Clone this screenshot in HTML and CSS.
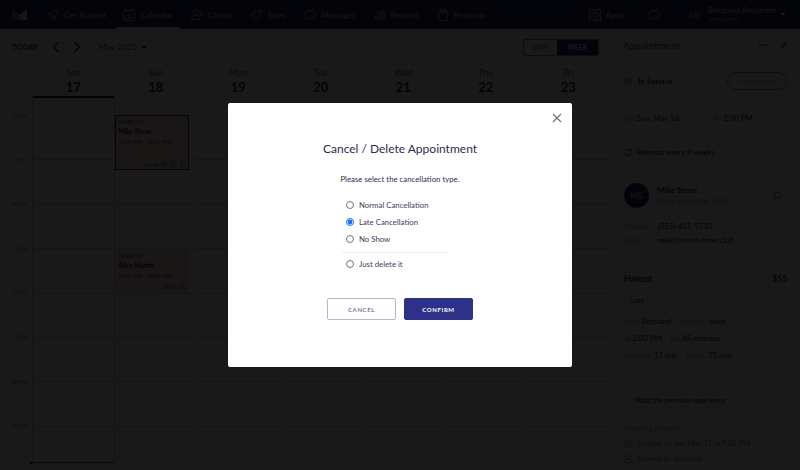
FILE: index.html
```html
<!DOCTYPE html>
<html lang="en">
<head>
  <meta charset="UTF-8" />
  <title>Calendar</title>
  <link rel="stylesheet" href="styles.css">
</head>
<body>
  <svg class="sprites" width="0" height="0">
    <symbol id="i-repeat" viewBox="0 0 12 12">
      <path d="M2 6a4 4 0 0 1 7-2.6M10 6a4 4 0 0 1-7 2.6" fill="none" stroke="currentColor" stroke-width="1.3"/>
      <path d="M10.6 1.4v3H7.6zM1.4 10.6v-3h3z" fill="currentColor"/>
    </symbol>
    <symbol id="i-new" viewBox="0 0 12 12">
      <circle cx="6" cy="6" r="5" fill="none" stroke="currentColor"/>
      <path d="M4 4l4 4M8 4l-4 4" stroke="currentColor"/>
    </symbol>
    <symbol id="i-chat" viewBox="0 0 14 14">
      <path d="M7 1.5c3.300 0 6 2.100 6 4.800s-2.700 4.800-6 4.800c-.8 0-1.500-.1-2.200-.3L2 12.500l.6-2.800C1.600 8.800 1 7.600 1 6.300 1 3.600 3.700 1.500 7 1.500z" fill="none" stroke="currentColor"/>
    </symbol>
  </svg>

  <!-- Top nav -->
  <header class="topbar">
    <svg class="logo" viewBox="0 0 15 11">
      <path d="M0 0l7.500 6V11H0z" fill="#777"/>
      <path d="M15 0L7.500 6V11H15z" fill="#ddd"/>
    </svg>
    <nav class="nav">
      <a class="nav-item">
        <svg class="nav-icon" viewBox="0 0 12 12"><path d="M4 8C4 5 7 1.500 11 1c-.5 4-4 7-7 7zM3 5.500H1l2-2h2M6.500 9v2l2-2V7M3 9l-2 2" fill="none" stroke="currentColor" stroke-width=".8"/></svg>
        Get Started
      </a>
      <a class="nav-item active">
        <svg class="nav-icon" viewBox="0 0 12 12"><rect x=".5" y="1.500" width="11" height="10" rx="1" fill="none" stroke="currentColor" stroke-width=".8"/><path d="M3 .5v2M9 .5v2" stroke="currentColor" stroke-width=".8"/><path d="M4 5.500h1.500v4H4M7.500 5.500v4" fill="none" stroke="currentColor" stroke-width=".7"/></svg>
        Calendar
      </a>
      <a class="nav-item">
        <svg class="nav-icon" viewBox="0 0 12 12"><circle cx="4.500" cy="3.500" r="2.300" fill="none" stroke="currentColor" stroke-width=".8"/><circle cx="8.500" cy="3.500" r="2" fill="none" stroke="currentColor" stroke-width=".8"/><path d="M.5 10.500c0-3 2-4 4-4s4 1 4 4zM9 6.500c1.500 0 2.500 1 2.500 3" fill="none" stroke="currentColor" stroke-width=".8"/></svg>
        Clients
      </a>
      <a class="nav-item">
        <svg class="nav-icon" viewBox="0 0 12 12"><path d="M7 1.500h4v4L5.500 11 1 6.500z" fill="none" stroke="currentColor" stroke-width=".8"/><circle cx="9" cy="3.500" r=".8" fill="none" stroke="currentColor" stroke-width=".6"/></svg>
        Sales
      </a>
      <a class="nav-item">
        <svg class="nav-icon"><use href="#i-chat"/></svg>
        Messages
      </a>
      <a class="nav-item">
        <svg class="nav-icon" viewBox="0 0 12 12"><path d="M1 11V7h2v4M5 11V5h2v6M9 11V3h2v8M1 5l3-2 3 1 3-3" fill="none" stroke="currentColor" stroke-width=".8"/></svg>
        Reports
      </a>
      <a class="nav-item">
        <svg class="nav-icon" viewBox="0 0 12 12"><rect x="1.500" y="2" width="9" height="9.500" rx="1" fill="none" stroke="currentColor" stroke-width=".8"/><rect x="4" y=".5" width="4" height="3" fill="none" stroke="currentColor" stroke-width=".8"/></svg>
        Products
      </a>
    </nav>
    <div class="topbar-right">
      <a class="nav-item apps">
        <svg class="nav-icon" viewBox="0 0 12 12"><g fill="none" stroke="currentColor" stroke-width=".8"><rect x=".5" y=".5" width="4.500" height="4.500"/><rect x="7" y=".5" width="4.500" height="4.500"/><rect x=".5" y="7" width="4.500" height="4.500"/><rect x="7" y="7" width="4.500" height="4.500"/></g></svg>
        Apps
      </a>
      <a class="chat-link"><svg class="nav-icon"><use href="#i-chat"/></svg></a>
      <div class="user">
        <span class="user-initials">BB</span>
        <div class="user-name">
          <div>Bertrand Bruandet</div>
          <div class="user-biz">Nicelydone</div>
        </div>
        <span class="caret caret-user"></span>
      </div>
    </div>
  </header>

  <main class="main">
    <!-- Calendar -->
    <section class="calendar">
      <div class="toolbar">
        <span class="today">TODAY</span>
        <svg class="chev" viewBox="0 0 8 12"><path d="M6.500 1L1.500 6l5 5" fill="none" stroke="currentColor" stroke-width="1.100"/></svg>
        <svg class="chev chev-next" viewBox="0 0 8 12"><path d="M1.500 1l5 5-5 5" fill="none" stroke="currentColor" stroke-width="1.100"/></svg>
        <span class="month">May 2025</span>
        <span class="caret"></span>
        <div class="view-toggle">
          <span class="view-btn">DAY</span>
          <span class="view-btn on">WEEK</span>
        </div>
      </div>

      <div class="days">
        <div class="day selected"><span>Sat</span><b>17</b></div>
        <div class="day"><span>Sun</span><b>18</b></div>
        <div class="day"><span>Mon</span><b>19</b></div>
        <div class="day"><span>Tue</span><b>20</b></div>
        <div class="day"><span>Wed</span><b>21</b></div>
        <div class="day"><span>Thu</span><b>22</b></div>
        <div class="day"><span>Fri</span><b>23</b></div>
      </div>

      <div class="grid">
        <div class="hours">
          <span>2 PM</span><span>3 PM</span><span>4 PM</span><span>5 PM</span>
          <span>6 PM</span><span>7 PM</span><span>8 PM</span><span>9 PM</span>
        </div>
        <div class="col col-today"><span class="now-mark"></span></div>
        <div class="col">
          <div class="event event-selected">
            <div class="ev-type">HAIRCUT</div>
            <div class="ev-name">Mike Stone</div>
            <div class="ev-time">2:00 PM - 3:15 PM</div>
            <div class="ev-foot">NEW
              <svg class="ev-icon"><use href="#i-new"/></svg>
              <svg class="ev-icon" viewBox="0 0 12 12"><rect x="1" y="1" width="10" height="10" rx="3" fill="none" stroke="currentColor"/><path d="M3.500 4.500h5M3.500 7.500h5" stroke="currentColor"/></svg>
              <svg class="ev-icon"><use href="#i-repeat"/></svg>
            </div>
          </div>
          <div class="event event-alice">
            <div class="ev-type">HAIRCUT</div>
            <div class="ev-name">Alice Martin</div>
            <div class="ev-time">5:00 PM - 6:00 PM</div>
            <div class="ev-foot">NEW <svg class="ev-icon"><use href="#i-new"/></svg></div>
          </div>
        </div>
        <div class="col"></div><div class="col"></div><div class="col"></div><div class="col"></div><div class="col"></div>
      </div>
    </section>

    <!-- Appointment panel -->
    <aside class="panel">
      <div class="panel-head">
        <span class="panel-title">Appointment</span>
        <span class="dots"><i></i><i></i><i></i></span>
        <svg class="pencil" viewBox="0 0 10 10"><path d="M1 9l.6-2.600L7 1l2 2-5.400 5.400z" fill="currentColor"/></svg>
      </div>
      <div class="row status">
        <span class="status-dot"></span>
        <b>In Service</b>
        <span class="checkout">CHECKOUT</span>
      </div>
      <div class="row when">
        <span class="when-cell"><em>On</em> Sun, May 18</span>
        <span class="when-cell when-at"><em>At</em> 2:00 PM</span>
      </div>
      <div class="row repeats">
        <svg class="small-icon"><use href="#i-repeat"/></svg>
        Repeats every 4 weeks
      </div>
      <div class="client">
        <div class="client-top">
          <div class="avatar">MS</div>
          <div class="client-name">
            <b>Mike Stone</b>
            <em>Client since May 2025</em>
          </div>
          <span class="msg-btn"><svg class="small-icon"><use href="#i-chat"/></svg></span>
        </div>
        <div class="contact"><em>Phone:</em><span>(555) 415-9730</span></div>
        <div class="contact"><em>Email:</em><span>mike@nicelydone.club</span></div>
      </div>
      <div class="service">
        <div class="service-head"><b>Haircut</b><b>$55</b></div>
        <span class="tag">Luxe</span>
        <div class="meta"><em>with</em> Bertrand <em class="gap">request:</em> none</div>
        <div class="meta"><em>at</em> 2:00 PM <em class="gap">for</em> 45 minutes</div>
        <div class="meta"><em>process:</em> 15 min <em class="gap">finish:</em> 15 min</div>
      </div>
      <div class="booking">
        <div class="note">Want the premium experience</div>
        <div class="booking-title">Booking Details</div>
        <div class="booking-row">
          <svg class="small-icon" viewBox="0 0 12 12"><circle cx="6" cy="6" r="5" fill="none" stroke="currentColor"/><path d="M3.500 4.500L6 7l2.500-2.500" fill="none" stroke="currentColor"/></svg>
          Booked on Sat, May 17 at 9:08 PM
        </div>
        <div class="booking-row">
          <svg class="small-icon" viewBox="0 0 12 12"><circle cx="6" cy="3.500" r="2.700" fill="none" stroke="currentColor"/><path d="M1 11.500c0-3 2-4.500 5-4.500s5 1.500 5 4.500z" fill="none" stroke="currentColor"/></svg>
          Booked by Bertrand
        </div>
      </div>
    </aside>
  </main>

  <!-- Cancel modal -->
  <div class="overlay">
    <div class="modal">
      <button class="modal-close" aria-label="Close">
        <svg viewBox="0 0 10 10"><path d="M1 1l8 8M9 1l-8 8" stroke="currentColor" stroke-width="1.100"/></svg>
      </button>
      <h1 class="modal-title">Cancel / Delete Appointment</h1>
      <p class="modal-text">Please select the cancellation type.</p>
      <form class="modal-form">
        <div class="options">
          <label class="option"><input type="radio" name="cancel-type"> Normal Cancellation</label>
          <label class="option"><input type="radio" name="cancel-type" checked> Late Cancellation</label>
          <label class="option"><input type="radio" name="cancel-type"> No Show</label>
          <div class="options-line"></div>
          <label class="option"><input type="radio" name="cancel-type"> Just delete it</label>
        </div>
        <div class="modal-actions">
          <button type="button" class="btn btn-cancel">CANCEL</button>
          <button type="button" class="btn btn-confirm">CONFIRM</button>
        </div>
      </form>
    </div>
  </div>
</body>
</html>
```

FILE: styles.css
```css
html, body {
  height: 100%;
  margin: 0;
  padding: 0;
}

body {
  height: 470px;
  overflow: hidden;
  display: flex;
  flex-direction: column;
  background-color: #fff;
  color: #23233f;
  font-family: "Lato", "Noto Sans", sans-serif;
  font-size: 8px;
}

em {
  font-style: normal;
  color: #9a9aa8;
}

.sprites {
  position: absolute;
}

/* Top nav */
.topbar {
  height: 29px;
  flex: none;
  display: flex;
  align-items: stretch;
  background-color: #20206a;
  color: #fff;
}

.logo {
  width: 15px;
  height: 11px;
  margin: 9px 0 0 12px;
}

.nav {
  display: flex;
  margin-left: 13px;
}

.nav-item {
  display: flex;
  align-items: center;
  gap: 5px;
  padding: 0 7px;
  margin-right: 4px;
  font-size: 8px;
  letter-spacing: .1px;
  color: #ddd;
}

.nav-item.active {
  border-bottom: 2px solid #fff;
  padding-top: 2px;
}

.nav-icon {
  width: 12px;
  height: 12px;
}

.topbar-right {
  margin-left: auto;
  display: flex;
  align-items: center;
}

.apps {
  padding-right: 12px;
  margin-right: 0;
  height: 14px;
  border-right: 1px solid #334;
}

.chat-link {
  display: flex;
  padding: 0 11px;
  height: 14px;
  align-items: center;
  border-right: 1px solid #334;
  color: #ddd;
}

.user {
  display: flex;
  align-items: center;
  padding: 0 14px 0 17px;
}

.user-initials {
  width: 19px;
  font-size: 8px;
  color: #ccc;
}

.user-name {
  font-size: 8px;
  letter-spacing: .15px;
  line-height: 9px;
  color: #ddd;
}

.user-biz {
  font-size: 6px;
  letter-spacing: 0;
  line-height: 8px;
  color: #aaa;
}

.caret {
  width: 0;
  height: 0;
  border: 3px solid transparent;
  border-top: 3px solid #23233f;
  border-bottom: none;
  margin-left: 4px;
}

.caret-user {
  border-top-color: #ddd;
  margin-left: 4px;
  border-left-width: 3.500px;
  border-right-width: 3.500px;
}

/* Main area */
.main {
  flex: 1;
  display: flex;
  min-height: 0;
}

.calendar {
  width: 610px;
  flex: none;
}

.toolbar {
  height: 36px;
  display: flex;
  align-items: center;
  padding: 0 11px 0 12px;
}

.today {
  font-size: 7.500px;
  font-weight: 700;
  letter-spacing: .2px;
}

.chev {
  width: 8px;
  height: 12px;
  margin-left: 14px;
}

.chev-next {
  margin-left: 13px;
}

.month {
  margin-left: 17px;
  font-size: 8.200px;
  letter-spacing: .3px;
  color: #55556a;
}

.view-toggle {
  margin-left: auto;
  width: 76px;
  height: 17px;
  display: flex;
  border: 1px solid #888;
  border-radius: 2px;
  box-sizing: border-box;
  overflow: hidden;
  font-size: 6.500px;
  font-weight: 700;
  letter-spacing: .4px;
}

.view-btn {
  flex: 1;
  display: flex;
  align-items: center;
  justify-content: center;
  color: #778;
}

.view-btn.on {
  background-color: #20206a;
  color: #fff;
  flex: 1.250;
}

.days {
  display: grid;
  grid-template-columns: repeat(7, 82.5px);
  margin-left: 32px;
  height: 31px;
}

.day {
  display: flex;
  flex-direction: column;
  align-items: center;
  box-sizing: border-box;
  color: #667;
  font-size: 9px;
  line-height: 10px;
  padding-top: 3px;
}

.day b {
  font-size: 13px;
  line-height: 18px;
  color: #23233f;
}

.day.selected {
  border-bottom: 2px solid #23233f;
}

.grid {
  display: grid;
  grid-template-columns: 32px repeat(7, 82.5px);
  height: 374px;
  box-sizing: border-box;
  background-image: repeating-linear-gradient(to bottom, transparent 0, transparent 43.4px, #ccc 43.4px, #ccc 44.4px);
  background-position: 32px 20px;
  background-repeat: no-repeat;
  background-size: 578px 311px;
}

.hours {
  display: flex;
  flex-direction: column;
  padding-top: 15.500px;
  font-size: 6.500px;
  color: #889;
  text-align: right;
  padding-right: 5px;
}

.hours span {
  height: 44.4px;
  line-height: 8px;
}

.col {
  border-left: 1px solid #eee;
  box-sizing: border-box;
}

.col-today {
  position: relative;
  border-left: 1px solid #ccc;
  border-right: 1px solid #ccc;
  height: 367px;
  border-bottom: 1px solid #555;
}

.now-mark {
  position: absolute;
  left: -3px;
  bottom: -3px;
  border: 2.500px solid transparent;
  border-left: 3px solid #333;
  border-right: none;
}

.event {
  width: 74px;
  box-sizing: border-box;
  background-color: #fadbd2;
  padding: 3px;
  margin-left: -1px;
  display: flex;
  flex-direction: column;
  font-size: 6px;
}

.event-selected {
  height: 55px;
  margin-top: 19px;
  border: 1px solid #20206a;
  padding: 2px 2px 1px 3px;
}

.event-alice {
  height: 44px;
  margin-top: 79px;
  padding-left: 4px;
}

.ev-name {
  font-size: 6.500px;
  font-weight: 700;
  line-height: 9px;
  margin-top: 1px;
}

.ev-type {
  line-height: 8px;
  color: #445;
}

.ev-time {
  font-size: 6.300px;
  margin-top: 2px;
  line-height: 8px;
  color: #445;
}

.ev-foot {
  margin-top: auto;
  display: flex;
  align-items: center;
  justify-content: flex-end;
  gap: 2px;
  font-size: 6px;
  color: #556;
}

.ev-icon {
  width: 7px;
  height: 7px;
}

/* Appointment panel */
.panel {
  flex: 1;
  min-width: 0;
  border-left: 1px solid #ddd;
  font-size: 7.800px;
}

.panel-head {
  height: 33px;
  display: flex;
  align-items: center;
  padding: 0 12px;
  border-bottom: 1px solid #ddd;
  box-sizing: border-box;
}

.panel-title {
  font-size: 9.500px;
  letter-spacing: .2px;
  color: #445;
}

.dots {
  margin-left: auto;
  display: flex;
  gap: 1px;
}

.dots i {
  width: 2px;
  height: 2px;
  border-radius: 50%;
  background-color: #23233f;
}

.pencil {
  width: 8px;
  height: 8px;
  margin-left: 13px;
  color: #667;
}

.row {
  display: flex;
  align-items: center;
  padding: 0 13px;
  border-bottom: 1px solid #ddd;
  box-sizing: border-box;
}

.status {
  height: 39px;
  font-size: 8px;
}

.status-dot {
  width: 8px;
  height: 8px;
  border-radius: 50%;
  background-color: #f7a0a0;
  margin-right: 6px;
}

.checkout {
  margin-left: auto;
  width: 60px;
  height: 18px;
  border: 1px solid #888;
  border-radius: 9px;
  box-sizing: border-box;
  display: flex;
  align-items: center;
  justify-content: center;
  font-size: 6.500px;
  letter-spacing: .4px;
  color: #99a;
}

.when {
  height: 34px;
}

.when-cell {
  width: 81px;
}

.when-at {
  border-left: 1px solid #ddd;
  padding-left: 13px;
  height: 100%;
  display: flex;
  align-items: center;
  gap: 3px;
}

.repeats {
  height: 35px;
  gap: 4px;
}

.small-icon {
  width: 9px;
  height: 9px;
}

.client {
  padding: 13px 13px 0;
  height: 95px;
  box-sizing: border-box;
  border-bottom: 1px solid #ddd;
}

.client-top {
  display: flex;
  align-items: center;
  margin-bottom: 11px;
}

.avatar {
  width: 25px;
  height: 25px;
  border-radius: 50%;
  background-color: #20206a;
  color: #ddd;
  display: flex;
  align-items: center;
  justify-content: center;
  font-size: 9px;
  margin-right: 8px;
}

.client-name {
  display: flex;
  flex-direction: column;
  font-size: 8px;
  line-height: 11px;
}

.client-name em {
  font-size: 7.200px;
}

.msg-btn {
  margin-left: auto;
  width: 20px;
  height: 18px;
  border: 1px solid #ddd;
  box-sizing: border-box;
  display: flex;
  align-items: center;
  justify-content: center;
}

.contact {
  display: flex;
  height: 14px;
  align-items: center;
}

.contact em {
  width: 34px;
}

.service {
  padding: 0 13px;
  height: 108px;
  box-sizing: border-box;
  border-bottom: 1px solid #ddd;
}

.service-head {
  display: flex;
  justify-content: space-between;
  padding-top: 9px;
  line-height: 10px;
  font-size: 8.500px;
}

.tag {
  display: inline-block;
  margin-top: 9px;
  padding: 2px 5px;
  border: 1px solid #eee;
  font-size: 7px;
  line-height: 9px;
}

.meta {
  line-height: 17px;
}

.tag + .meta {
  margin-top: 5px;
}

.gap {
  margin-left: 6px;
}

.booking {
  padding: 14px 13px 0;
}

.note {
  height: 25px;
  display: flex;
  align-items: center;
  padding-left: 10px;
  border: 1px solid #fde9d9;
  background-color: #fffaf5;
  font-size: 6.800px;
  box-sizing: border-box;
}

.booking-title {
  margin-top: 11px;
  line-height: 10px;
  color: #9a9aa8;
  font-size: 8px;
}

.booking-row {
  display: flex;
  align-items: center;
  gap: 4px;
  height: 15px;
  margin-top: 0;
  font-size: 7.400px;
  color: #778;
}

.booking-title + .booking-row {
  margin-top: 3px;
}

/* Modal */
.overlay {
  position: fixed;
  inset: 0;
  display: flex;
  align-items: center;
  justify-content: center;
  background-color: rgba(0, 0, 0, 0.9);
}

.modal {
  position: relative;
  width: 344px;
  height: 264px;
  box-sizing: border-box;
  padding-top: 37px;
  border-radius: 2px;
  background-color: #fff;
  text-align: center;
  color: #2c2c4e;
}

.modal-close {
  position: absolute;
  top: 10px;
  right: 10px;
  width: 10px;
  height: 10px;
  padding: 0;
  border: none;
  background: none;
  color: #6b6b80;
}

.modal-close svg {
  display: block;
}

.modal-title {
  margin: 0;
  font-size: 12px;
  line-height: 17px;
  font-weight: 400;
}

.modal-text {
  margin: 17px 0 0;
  font-size: 7.800px;
  line-height: 11px;
}

.modal-form {
  display: flex;
  flex-direction: column;
  align-items: center;
}

.options {
  width: 106px;
  margin: 11px 10px 0 0;
}

.option {
  display: flex;
  align-items: center;
  height: 17.200px;
  padding-left: 4px;
  font-size: 7.800px;
  color: #3c3c5a;
}

.option input {
  width: 8px;
  height: 8px;
  margin: 0 5px 0 0;
  accent-color: #1a73e8;
}

.options-line {
  height: 1px;
  margin: 4px 0 3px;
  background-color: #eee;
}

.modal-actions {
  display: flex;
  gap: 8px;
  margin-top: 25px;
}

.btn {
  width: 69px;
  height: 22px;
  padding: 1px 0 0;
  border-radius: 2px;
  box-sizing: border-box;
  font-family: inherit;
  font-size: 6px;
  font-weight: 700;
  letter-spacing: .6px;
}

.btn-cancel {
  border: 1px solid #b5b5cc;
  background-color: #fff;
  color: #7a7a99;
}

.btn-confirm {
  border: 1px solid #2e3188;
  background-color: #2e3188;
  color: #fff;
}
```
